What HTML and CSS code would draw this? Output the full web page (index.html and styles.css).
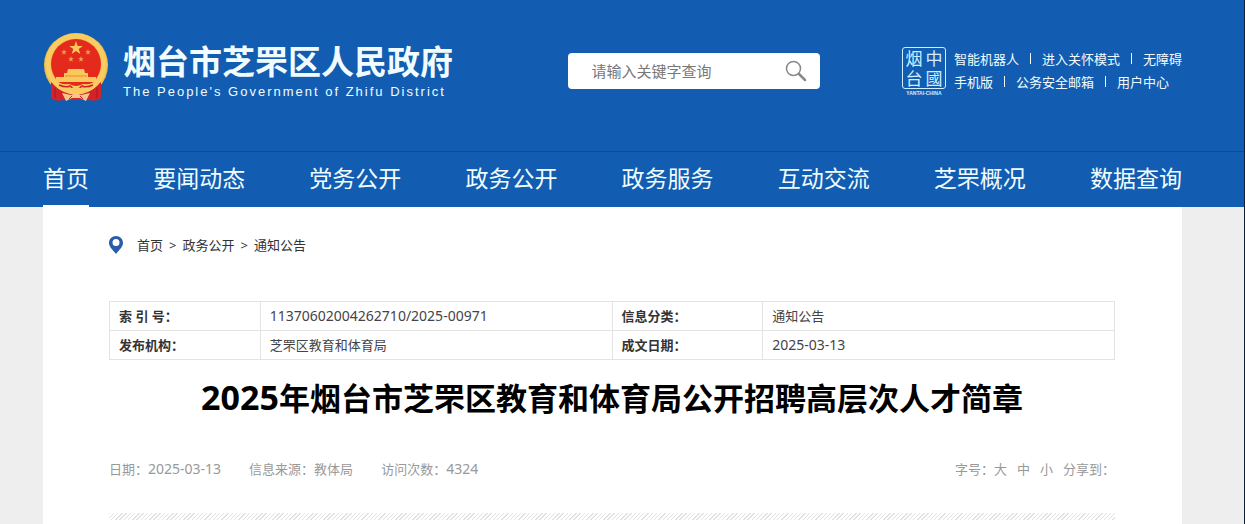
FILE: index.html
```html
<!DOCTYPE html>
<html lang="zh-CN">
<head>
    <meta charset="UTF-8">
    <meta name="viewport" content="width=device-width, initial-scale=1">
    <title>2025年烟台市芝罘区教育和体育局公开招聘高层次人才简章</title>
    <link rel="stylesheet" href="styles.css">
</head>
<body>
    <header class="header">
        <div class="top">
            <div class="brand">
                <svg class="emblem" viewBox="0 0 66 70" aria-hidden="true">
                    <circle cx="33" cy="33" r="32" fill="#f0bd50"/>
                    <path d="M8 50 L8 66 Q13 70 20 68 L46 68 Q53 70 58 66 L58 50 L46 58 H20 Z" fill="#d2232a"/>
                    <path d="M12 56 v10 M54 56 v10" stroke="#a8161c" stroke-width="1"/>
                    <circle cx="33" cy="32" r="28" fill="none" stroke="#f7cd62" stroke-width="5"/>
                    <circle cx="33" cy="32" r="25" fill="#e42a1d"/>
                    <path d="M33 9 l1.7 5 h5.200 l-4.200 3.100 l1.600 5 l-4.300 -3.100 l-4.300 3.100 l1.600 -5 l-4.200 -3.100 h5.200 Z" fill="#fbc85c"/>
                    <g fill="#f4a14a">
                        <path id="star" d="M21 17 l.7 2.200 h2.300 l-1.900 1.400 l.7 2.200 l-1.800 -1.400 l-1.800 1.400 l.7 -2.200 l-1.900 -1.400 h2.300 Z"/>
                        <use href="#star" x="24"/>
                        <use href="#star" x="7" y="7"/>
                        <use href="#star" x="17" y="7"/>
                    </g>
                    <path d="M25 37 h16 l1 4 h3 v4 h8 v5 H13 v-5 h8 v-4 h3 Z" fill="#fbc85c"/>
                    <path d="M22 44 h22" stroke="#ee8a30" stroke-width="1"/>
                    <path d="M9 48 Q18 53 26 52 Q30 54 33 54 Q36 54 40 52 Q48 53 57 48 Q53 58 42 60 L33 57 L24 60 Q13 58 9 48 Z" fill="#f7cd62"/>
                    <path d="M16 53 Q23 56 27 54 L33 59 L39 54 Q43 56 50 53" fill="none" stroke="#d2232a" stroke-width="1.5"/>
                    <path d="M27 57 Q33 53 39 57 L36 61 H30 Z" fill="#fbc85c"/>
                    <path d="M19 61 L28 63 Q33 60 38 63 L47 61 L43 69 L37 66 H29 L23 69 Z" fill="#f9c58a"/>
                    <path d="M29 64 l-3 3 M37 64 l3 3" stroke="#d2232a" stroke-width="1"/>
                </svg>
                <div class="brand-text">
                    <div class="site-name">烟台市芝罘区人民政府</div>
                    <div class="site-name-en">The People's Government of Zhifu District</div>
                </div>
            </div>
            <form class="search">
                <input type="text" aria-label="请输入关键字查询" placeholder="请输入关键字查询">
                <button type="submit" aria-label="搜索">
                    <svg viewBox="0 0 22 22" aria-hidden="true">
                        <circle cx="8.5" cy="8.5" r="7" fill="none" stroke="#888" stroke-width="1.5"/>
                        <path d="M14 14 L20 20" stroke="#888" stroke-width="2.5" stroke-linecap="round"/>
                    </svg>
                </button>
            </form>
            <div class="tools">
                <div class="seal">
                    <div class="seal-text">
                        <span>烟</span><span>中</span>
                        <span>台</span><span>國</span>
                    </div>
                    <div class="seal-en">YANTAI-CHINA</div>
                </div>
                <div class="tool-links">
                    <div><a href="#">智能机器人</a><i></i><a href="#">进入关怀模式</a><i></i><a href="#">无障碍</a></div>
                    <div><a href="#">手机版</a><i></i><a href="#">公务安全邮箱</a><i></i><a href="#">用户中心</a></div>
                </div>
            </div>
        </div>
        <nav class="nav">
            <a class="active" href="#">首页</a>
            <a href="#">要闻动态</a>
            <a href="#">党务公开</a>
            <a href="#">政务公开</a>
            <a href="#">政务服务</a>
            <a href="#">互动交流</a>
            <a href="#">芝罘概况</a>
            <a href="#">数据查询</a>
        </nav>
    </header>
    <main class="content">
        <div class="crumbs">
            <svg viewBox="0 0 14 18" aria-hidden="true">
                <path fill-rule="evenodd" d="M7 0 C3 0 0 3 0 7 C0 11 4 14 7 18 C10 14 14 11 14 7 C14 3 11 0 7 0 Z M7 3 A3.5 3.5 0 1 1 7 10 A3.5 3.5 0 1 1 7 3 Z" fill="#2a5caa"/>
            </svg>
            <a href="#">首页</a><span>&gt;</span><a href="#">政务公开</a><span>&gt;</span><a href="#">通知公告</a>
        </div>
        <table class="info">
            <tr>
                <th scope="row">索 引 号：</th>
                <td class="num">11370602004262710/2025-00971</td>
                <th scope="row">信息分类：</th>
                <td>通知公告</td>
            </tr>
            <tr>
                <th scope="row">发布机构：</th>
                <td>芝罘区教育和体育局</td>
                <th scope="row">成文日期：</th>
                <td class="num">2025-03-13</td>
            </tr>
        </table>
        <h1><span class="year">2025</span>年烟台市芝罘区教育和体育局公开招聘高层次人才简章</h1>
        <div class="meta">
            <div class="meta-left">
                <span>日期：<span class="num">2025-03-13</span></span>
                <span>信息来源：教体局</span>
                <span>访问次数：<span class="num">4324</span></span>
            </div>
            <div class="meta-right">
                <span>字号：<a href="#">大</a></span>
                <a href="#">中</a>
                <a href="#">小</a>
                <span>分享到：</span>
            </div>
        </div>
        <div class="stripe"></div>
    </main>
</body>
</html>
```
FILE: styles.css
```css
* {
    box-sizing: border-box;
}
body {
    margin: 0;
    min-height: 100vh;
    display: flex;
    flex-direction: column;
    background: #eee;
    border-right: 1px solid #10203c;
    font-family: "Noto Sans", "Noto Sans CJK SC", sans-serif;
    font-size: 13px;
    line-height: 20px;
    color: #333;
}
a {
    color: inherit;
    text-decoration: none;
}
.header {
    background: #125cb1;
    color: #f0fcff;
}
.top {
    display: flex;
    align-items: flex-start;
    justify-content: space-between;
    height: 151px;
    padding: 32px 62px 0 43px;
}
.brand {
    display: flex;
    gap: 14px;
}
.emblem {
    width: 66px;
    height: 70px;
}
.brand-text {
    padding-top: 10px;
}
.site-name {
    font-size: 33px;
    font-weight: bold;
    line-height: 40px;
}
.site-name-en {
    font-family: "Liberation Sans", Arial, sans-serif;
    font-size: 13px;
    letter-spacing: 2px;
    white-space: nowrap;
}
.search {
    display: flex;
    align-items: center;
    width: 252px;
    height: 36px;
    margin-top: 21px;
    margin-left: 34px;
    padding: 0 13px 0 23px;
    background: #fff;
    border-radius: 4px;
}
.search input {
    flex: 1;
    min-width: 0;
    padding: 0;
    border: 0;
    outline: 0;
    background: none;
    font: inherit;
    font-size: 15px;
}
.search input::placeholder {
    color: #777;
}
.search button {
    padding: 0;
    border: 0;
    background: none;
    line-height: 0;
}
.search button svg {
    width: 22px;
    height: 22px;
}
.tools {
    display: flex;
    gap: 8px;
    padding-top: 14px;
}
.seal {
    width: 44px;
    margin-top: 1px;
    color: #cfeeff;
}
.seal-text {
    display: grid;
    grid-template-columns: 18px 18px;
    gap: 2px;
    justify-content: center;
    padding: 1px 0;
    border: 1px solid #cfeeff;
    border-radius: 3px;
    font-family: "Noto Sans CJK SC", sans-serif;
    font-size: 17px;
    line-height: 18px;
    text-align: center;
}
.seal-en {
    font-family: "Liberation Sans", Arial, sans-serif;
    font-size: 5px;
    font-weight: bold;
    line-height: 8px;
    text-align: center;
}
.tool-links {
    padding-top: 2px;
    line-height: 23px;
    white-space: nowrap;
}
.tool-links i {
    display: inline-block;
    width: 1px;
    height: 11px;
    margin: 0 11px;
    background: #f0fcff;
}
.nav {
    display: flex;
    justify-content: space-between;
    padding: 0 62px 0 43px;
    border-top: 1px solid #0c4a98;
    font-size: 23px;
    line-height: 53px;
    white-space: nowrap;
}
.nav a {
    border-bottom: 2px solid transparent;
}
.nav .active {
    border-bottom-color: #fff;
}
.content {
    flex: 1;
    margin: 0 62px 0 43px;
    padding: 28px 67px 5px 66px;
    background: #fff;
}
.crumbs {
    display: flex;
    align-items: center;
}
.crumbs svg {
    width: 14px;
    height: 18px;
    margin-right: 14px;
}
.crumbs span {
    margin: 0 6px;
}
.info {
    width: 100%;
    margin-top: 46px;
    border-collapse: collapse;
    table-layout: fixed;
}
.info th,
.info td {
    height: 29px;
    padding: 0 9px;
    border: 1px solid #e3e3e3;
    text-align: left;
}
.info th {
    width: 15%;
}
.info td {
    color: #444;
}
.num {
    font-size: 14px;
}
h1 {
    margin: 12px 0 0;
    font-size: 31px;
    line-height: 50px;
    text-align: center;
    color: #000;
}
.year {
    font-size: 34px;
}
.meta {
    display: flex;
    justify-content: space-between;
    margin-top: 36px;
    color: #999;
}
.meta-left {
    display: flex;
    gap: 28px;
}
.meta-right {
    display: flex;
    gap: 10px;
}
.stripe {
    height: 7px;
    margin-top: 34px;
    background: repeating-linear-gradient(135deg, #e2e2e2 0 1px, #fff 1px 3px);
}
```
